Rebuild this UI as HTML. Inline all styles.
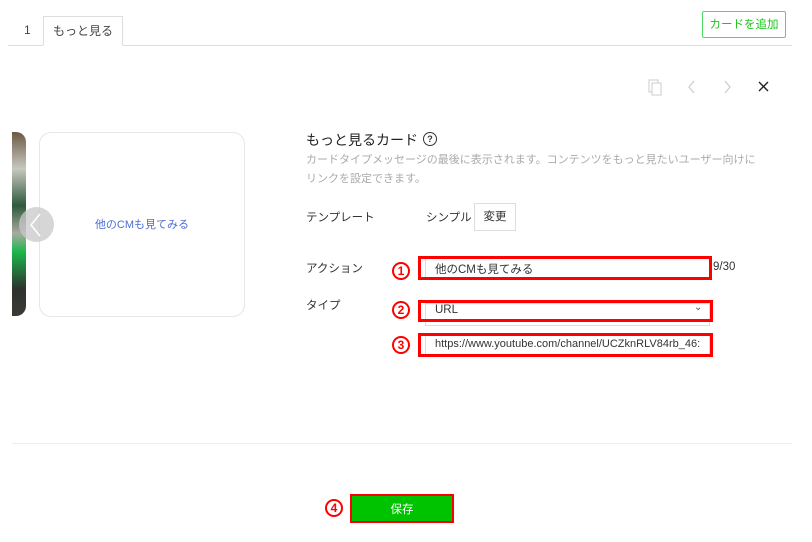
<!DOCTYPE html>
<html><head><meta charset="utf-8"><style>
*{box-sizing:border-box;margin:0;padding:0}
body{width:812px;height:542px;background:#fff;font-family:"Liberation Sans","Noto Sans CJK JP",sans-serif;position:relative;overflow:hidden;color:#333}
.a{position:absolute}
.red{position:absolute;border:3px solid #f00}
.num{position:absolute;width:18px;height:18px;border:2px solid #f00;border-radius:50%;color:#f00;font-weight:bold;font-size:12px;line-height:14px;text-align:center}
</style></head><body>
<div class="a" style="left:8px;top:45px;width:784px;height:1px;background:#ddd"></div>
<div class="a" style="left:24px;top:23px;font-size:12px;color:#444">1</div>
<div class="a" style="left:43px;top:16px;width:80px;height:30px;border:1px solid #ddd;border-bottom:1px solid #fff;background:#fff;font-size:12px;text-align:center;line-height:28px;color:#444">もっと見る</div>
<div class="a" style="left:702px;top:11px;width:84px;height:27px;border:1px solid #4cd964;border-radius:2px;color:#1bc41b;font-size:11.5px;text-align:center;line-height:27px">カードを追加</div>
<svg class="a" style="left:640px;top:76px" width="140" height="22">
<rect x="9" y="4" width="9" height="12" fill="none" stroke="#ccc"/><rect x="12" y="7" width="9" height="12" fill="#fff" stroke="#ccc"/>
<path d="M54 5 L49 11 L54 17" fill="none" stroke="#ccc" stroke-width="1.2"/>
<path d="M85 5 L90 11 L85 17" fill="none" stroke="#ccc" stroke-width="1.2"/>
<path d="M119 6 L128 15 M128 6 L119 15" stroke="#222" stroke-width="1.4"/>
</svg>
<div class="a" style="left:12px;top:132px;width:14px;height:184px;border-radius:0 10px 10px 0;background:linear-gradient(#6b5a44,#c8c8c0 20%,#2e5a3a 40%,#a9a9a0 55%,#1cb84a 65%,#2e332e 85%,#3a3a35)"></div>
<div class="a" style="left:39px;top:132px;width:206px;height:185px;border:1px solid #e6e6e6;border-radius:12px"></div>
<div class="a" style="left:39px;top:216px;width:206px;text-align:center;font-size:11px;color:#4a6fd8">他のCMも見てみる</div>
<div class="a" style="left:19px;top:207px;width:35px;height:35px;border-radius:50%;background:rgba(200,200,200,.75)"></div>
<svg class="a" style="left:26px;top:212px" width="20" height="26"><path d="M14 2 L5 13 L14 24" fill="none" stroke="#fff" stroke-width="1.5"/></svg>
<div class="a" style="left:306px;top:130px;font-size:14px;color:#222">もっと見るカード</div>
<div class="a" style="left:423px;top:132px;width:14px;height:14px;border:1.3px solid #333;border-radius:50%;font-size:9px;text-align:center;line-height:12px;font-weight:bold">?</div>
<div class="a" style="left:306px;top:151px;font-size:11px;color:#aaa;line-height:19px;width:470px">カードタイプメッセージの最後に表示されます。コンテンツをもっと見たいユーザー向けに<br>リンクを設定できます。</div>
<div class="a" style="left:306px;top:209px;font-size:11.5px;color:#333">テンプレート</div>
<div class="a" style="left:426px;top:209px;font-size:11.5px;color:#333">シンプル</div>
<div class="a" style="left:474px;top:203px;width:42px;height:28px;border:1px solid #ddd;font-size:11.5px;text-align:center;line-height:26px">変更</div>
<div class="a" style="left:306px;top:260px;font-size:11.5px;color:#333">アクション</div>
<div class="num" style="left:392px;top:262px">1</div>
<div class="a" style="left:425px;top:258px;width:285px;height:22px;border:1px solid #ddd"></div>
<div class="red" style="left:418px;top:256px;width:294px;height:24px"></div>
<div class="a" style="left:435px;top:261px;font-size:11.5px;color:#333">他のCMも見てみる</div>
<div class="a" style="left:713px;top:261px;font-size:11.5px;color:#333">9/30</div>
<div class="a" style="left:306px;top:297px;font-size:11.5px;color:#333">タイプ</div>
<div class="num" style="left:392px;top:301px">2</div>
<div class="a" style="left:425px;top:303px;width:285px;height:23px;border:1px solid #ddd"></div>
<div class="red" style="left:418px;top:300px;width:295px;height:22px"></div>
<div class="a" style="left:435px;top:304px;font-size:11.5px;color:#333">URL</div>
<div class="a" style="left:694px;top:302px;font-size:10px;color:#555">⌄</div>
<div class="num" style="left:392px;top:336px">3</div>
<div class="a" style="left:425px;top:335px;width:285px;height:22px;border:1px solid #ddd"></div>
<div class="red" style="left:418px;top:333px;width:295px;height:24px"></div>
<div class="a" style="left:435px;top:338px;font-size:11px;color:#333;width:270px;overflow:hidden;white-space:nowrap">https://www.youtube.com/channel/UCZknRLV84rb_46:</div>
<div class="a" style="left:12px;top:443px;width:780px;height:1px;background:#eee"></div>
<div class="num" style="left:325px;top:499px">4</div>
<div class="red" style="left:350px;top:494px;width:104px;height:29px;border-width:2px;background:#00c300"></div>
<div class="a" style="left:350px;top:501px;width:104px;text-align:center;font-size:11.5px;color:#fff">保存</div>
</body></html>
